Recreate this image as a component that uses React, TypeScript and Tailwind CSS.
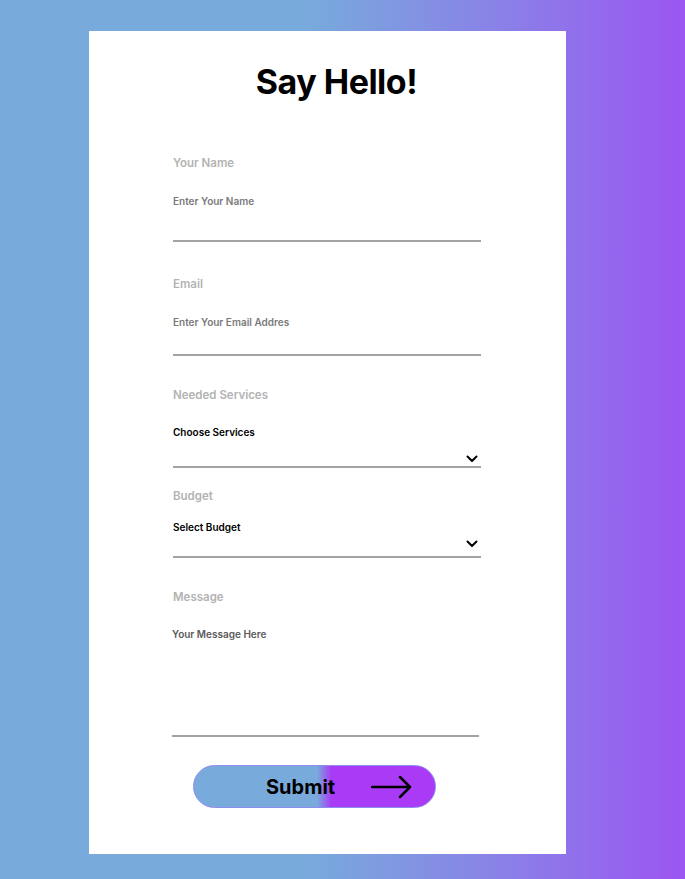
import React from "react";

function Chevron() {
  return (
    <svg width="12" height="8" viewBox="0 0 12 8" fill="none">
      <path d="M1.5 1.5L6 6L10.5 1.5" stroke="black" strokeWidth="2" strokeLinecap="round" strokeLinejoin="round" />
    </svg>
  );
}

function Label({ children }: { children: React.ReactNode }) {
  return <div className="h-4 text-[11.5px] leading-4 font-semibold text-[#b3b3b3]">{children}</div>;
}

export default function App() {
  return (
    <div className="min-h-[879px] bg-[linear-gradient(to_right,#78aadc_0%,#78aadc_45%,#8b7ee8_75%,#9c55f2_100%)] pt-[31px] pb-[25px] font-['Inter',sans-serif]">
      <div className="ml-[89px] w-[477px] bg-white pt-[29px] pb-[46px]">
        <h1 className="pl-[18px] text-center text-[34px] leading-[44px] font-bold text-black tracking-[-0.5px]">Say Hello!</h1>

        <form className="ml-[84px] mt-[51px] w-[308px]" onSubmit={ev => ev.preventDefault()}>
          <Label>Your Name</Label>
          <div className="mt-[24px] border-b-2 border-[#a3a3a3] pb-[33px] text-[10px] leading-3 font-semibold text-[#7a7a7a]">
            Enter Your Name
          </div>

          <div className="mt-[34px]">
            <Label>Email</Label>
          </div>
          <div className="mt-[24px] border-b-2 border-[#a3a3a3] pb-[26px] text-[10px] leading-3 font-semibold text-[#7a7a7a]">
            Enter Your Email Addres
          </div>

          <div className="mt-[31px]">
            <Label>Needed Services</Label>
          </div>
          <div className="mt-[23px] border-b-2 border-[#a3a3a3] pb-[3px]">
            <div className="text-[10px] leading-3 font-semibold text-black">Choose Services</div>
            <div className="mt-[17px] flex h-2 justify-end pr-[3px]">
              <Chevron />
            </div>
          </div>

          <div className="mt-[20px]">
            <Label>Budget</Label>
          </div>
          <div className="mt-[17px] border-b-2 border-[#a3a3a3] pb-[8px]">
            <div className="text-[10px] leading-3 font-semibold text-black">Select Budget</div>
            <div className="mt-[7px] flex h-2 justify-end pr-[3px]">
              <Chevron />
            </div>
          </div>

          <div className="mt-[31px]">
            <Label>Message</Label>
          </div>
          <div className="-ml-px mt-[23px] h-[109px] w-[307px] border-b-2 border-[#a3a3a3] text-[10px] leading-3 font-semibold text-[#5a5a5a]">
            Your Message Here
          </div>

          <button
            type="submit"
            className="ml-[20px] mt-[28px] flex h-[43px] w-[243px] items-center rounded-full border border-[#8f8cf0] bg-[linear-gradient(to_right,#78aadc_0%,#78aadc_51%,#a93bf6_57%,#aa3af6_100%)]"
          >
            <span className="ml-[72px] text-[20px] leading-6 font-bold text-black">Submit</span>
            <svg className="ml-[36px]" width="42" height="24" viewBox="0 0 42 24" fill="none">
              <path d="M1 12H39M29 2L39 12L29 22" stroke="black" strokeWidth="2.5" strokeLinecap="round" strokeLinejoin="round" />
            </svg>
          </button>
        </form>
      </div>
    </div>
  );
}
